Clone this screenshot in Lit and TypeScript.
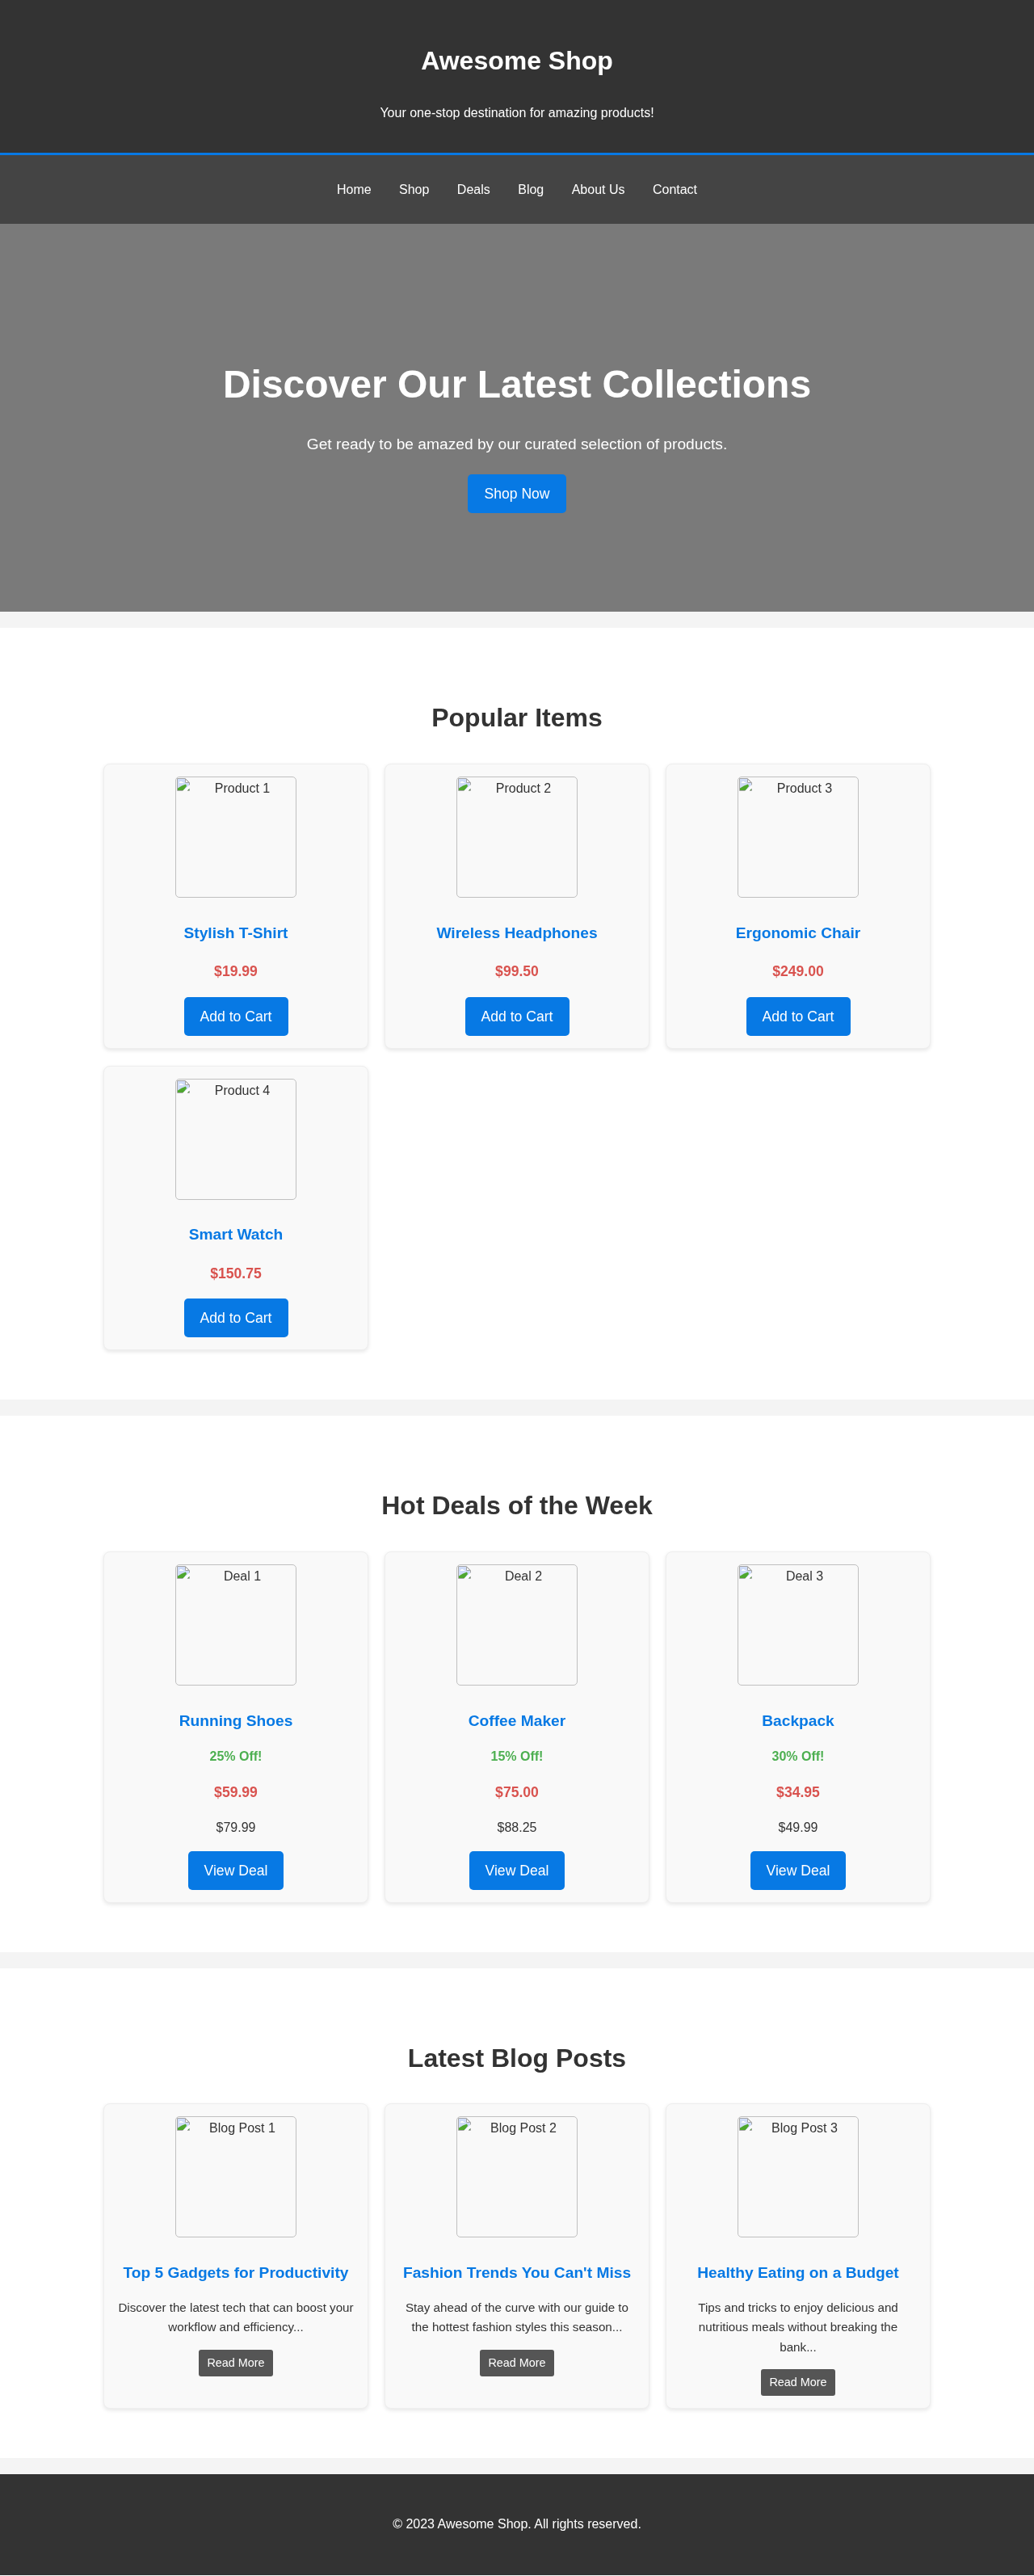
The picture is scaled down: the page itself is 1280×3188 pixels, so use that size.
import { LitElement, html, css } from 'lit';
import { customElement } from 'lit/decorators.js';

const products = [
  { alt: 'Product 1', name: 'Stylish T-Shirt', price: '$19.99' },
  { alt: 'Product 2', name: 'Wireless Headphones', price: '$99.50' },
  { alt: 'Product 3', name: 'Ergonomic Chair', price: '$249.00' },
  { alt: 'Product 4', name: 'Smart Watch', price: '$150.75' },
];

const deals = [
  { alt: 'Deal 1', name: 'Running Shoes', off: '25% Off!', price: '$59.99', was: '$79.99' },
  { alt: 'Deal 2', name: 'Coffee Maker', off: '15% Off!', price: '$75.00', was: '$88.25' },
  { alt: 'Deal 3', name: 'Backpack', off: '30% Off!', price: '$34.95', was: '$49.99' },
];

const posts = [
  { alt: 'Blog Post 1', title: 'Top 5 Gadgets for Productivity', text: 'Discover the latest tech that can boost your workflow and efficiency...' },
  { alt: 'Blog Post 2', title: "Fashion Trends You Can't Miss", text: 'Stay ahead of the curve with our guide to the hottest fashion styles this season...' },
  { alt: 'Blog Post 3', title: 'Healthy Eating on a Budget', text: 'Tips and tricks to enjoy delicious and nutritious meals without breaking the bank...' },
];

const navLinks = ['Home', 'Shop', 'Deals', 'Blog', 'About Us', 'Contact'];

@customElement('app-root')
export class AppRoot extends LitElement {
  static styles = css`
    :host {
      display: block;
      background: #f4f4f4;
      color: #333;
      font-family: 'Liberation Sans', Arial, sans-serif;
      font-size: 16px;
      line-height: 1.6;
      will-change: transform;
    }
    .site-header {
      background: #333;
      color: #fff;
      text-align: center;
      padding: 50px 0 36.4px;
      border-bottom: 3px solid #0779e4;
    }
    .site-header h1 {
      margin: 0 0 25.6px;
      font-size: 32px;
      line-height: 1.6;
    }
    .site-header p {
      margin: 0;
    }
    .site-nav {
      background: #444;
      padding: 30px 0;
      display: flex;
      justify-content: center;
      gap: 34.45px;
    }
    .site-nav a {
      color: #fff;
      text-decoration: none;
    }
    .hero {
      box-sizing: border-box;
      background: #7a7a7a;
      color: #fff;
      height: 480px;
      padding-top: 161px;
      text-align: center;
    }
    .hero h2 {
      margin: 0 0 19.6px;
      font-size: 48px;
      line-height: 1.6;
    }
    .hero p {
      margin: 0 0 21.6px;
      font-size: 19.2px;
    }
    .btn {
      display: inline-block;
      background: #0779e4;
      color: #fff;
      border-radius: 5px;
      padding: 10px 20px;
      font-size: 17.6px;
      line-height: 1.6;
    }
    .section {
      background: #fff;
      margin-top: 20px;
      padding: 86px 128px 61px;
    }
    .section h2 {
      margin: 0 0 30.5px;
      text-align: center;
      font-size: 32px;
      line-height: 1.6;
      color: #333;
    }
    .grid {
      display: grid;
      grid-template-columns: repeat(3, 1fr);
      gap: 21px 20px;
    }
    .card {
      background: #f9f9f9;
      border: 1px solid #eee;
      border-radius: 8px;
      box-shadow: 0 2px 5px rgba(0, 0, 0, 0.1);
      padding: 15px;
      text-align: center;
    }
    .thumb {
      box-sizing: border-box;
      width: 150px;
      height: 150px;
      margin: 0 auto;
      padding: 1px;
      border: 1px solid #c0c0c0;
      border-radius: 5px;
      overflow: hidden;
    }
    .thumb svg {
      float: left;
    }
    .card h3 {
      margin: 28.5px 0 15.2px;
      font-size: 19.2px;
      line-height: 1.6;
      color: #0779e4;
    }
    .price {
      margin: 17.6px 0;
      font-size: 17.6px;
      font-weight: bold;
      color: #d9534f;
    }
    .off + .price {
      margin: 17px 0;
    }
    .off {
      margin: 16px 0;
      font-weight: bold;
      color: #4caf50;
    }
    .was {
      margin: 16px 0;
    }
    .excerpt {
      margin: 15.2px 0;
      font-size: 15.2px;
    }
    .read-more {
      display: inline-block;
      background: #555;
      color: #fff;
      border-radius: 3px;
      padding: 5px 10px;
      font-size: 14.4px;
      line-height: 1.6;
    }
    .site-footer {
      background: #333;
      color: #fff;
      text-align: center;
      margin-top: 20px;
      padding: 48.5px 0 51px;
    }
  `;

  private thumb(alt: string) {
    return html`
      <div class="thumb">
        <svg width="16" height="16" viewBox="0 0 16 16">
          <path d="M1 1h9.5v4.5H15V15H1z" fill="#cfdcf8" />
          <path d="M3 5.5c0-1 1-1.500 2-1.500s1.500.5 2 1c1 0 1.500.5 1.500 1H2.500z" fill="#fff" />
          <path d="M1 15v-2.500L6 9.500l5-2 1 2.500L8 15z" fill="#4ea72e" />
          <path d="M13 15l2-2v2z" fill="#4ea72e" />
          <path d="M8 15l7-6v4l-2 2z" fill="#fff" />
          <path d="M.5 15.500V.5h10l5 5v3M.5 15.500h7M15.500 13v2.500H13" fill="none" stroke="#a6a6a6" />
          <path d="M10.500 1v4.500H15z" fill="#fff" stroke="#a6a6a6" stroke-linejoin="round" />
        </svg>
        ${alt}
      </div>
    `;
  }

  render() {
    return html`
      <header class="site-header">
        <h1>Awesome Shop</h1>
        <p>Your one-stop destination for amazing products!</p>
      </header>
      <nav class="site-nav">
        ${navLinks.map(link => html`<a href="#">${link}</a>`)}
      </nav>
      <section class="hero">
        <h2>Discover Our Latest Collections</h2>
        <p>Get ready to be amazed by our curated selection of products.</p>
        <a class="btn">Shop Now</a>
      </section>

      <section class="section">
        <h2>Popular Items</h2>
        <div class="grid">
          ${products.map(p => html`
            <article class="card">
              ${this.thumb(p.alt)}
              <h3>${p.name}</h3>
              <p class="price">${p.price}</p>
              <a class="btn">Add to Cart</a>
            </article>
          `)}
        </div>
      </section>

      <section class="section">
        <h2>Hot Deals of the Week</h2>
        <div class="grid">
          ${deals.map(d => html`
            <article class="card">
              ${this.thumb(d.alt)}
              <h3>${d.name}</h3>
              <p class="off">${d.off}</p>
              <p class="price">${d.price}</p>
              <p class="was">${d.was}</p>
              <a class="btn">View Deal</a>
            </article>
          `)}
        </div>
      </section>

      <section class="section">
        <h2>Latest Blog Posts</h2>
        <div class="grid">
          ${posts.map(b => html`
            <article class="card">
              ${this.thumb(b.alt)}
              <h3>${b.title}</h3>
              <p class="excerpt">${b.text}</p>
              <a class="read-more">Read More</a>
            </article>
          `)}
        </div>
      </section>

      <footer class="site-footer">© 2023 Awesome Shop. All rights reserved.</footer>
    `;
  }
}
